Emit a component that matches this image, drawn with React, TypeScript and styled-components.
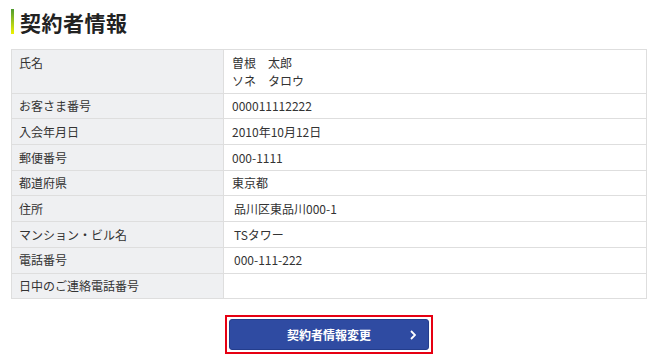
import React from "react";
import styled, { createGlobalStyle } from "styled-components";

const GlobalStyle = createGlobalStyle`
  html, body {
    margin: 0;
    padding: 0;
    background: #ffffff;
  }
  body {
    font-family: "Noto Sans CJK JP", "Noto Sans", sans-serif;
    color: #333333;
  }
`;

const Page = styled.div`
  width: 660px;
  box-sizing: border-box;
  padding: 9px 13px 0 11px;
`;

const Heading = styled.h2`
  display: flex;
  align-items: center;
  gap: 6px;
  margin: 0;
  height: 25px;
  font-size: 21px;
  font-weight: 700;
  color: #222222;
  letter-spacing: 0.5px;
`;

const HeadingBar = styled.span`
  width: 3px;
  height: 25px;
  flex: none;
  background: linear-gradient(to bottom, #4f9a2f 0%, #a6cc1a 55%, #eef200 100%);
`;

const Table = styled.table`
  width: 636px;
  margin-top: 15px;
  border-collapse: collapse;
  font-size: 12px;
  line-height: 18px;
  border: 1px solid #dedede;
`;

const Row = styled.tr`
  border-bottom: 1px solid #dedede;
`;

const Label = styled.th`
  width: 197px;
  padding: 3.5px 7px 3.2px;
  text-align: left;
  vertical-align: top;
  font-weight: 400;
  background: #eff0f2;
  color: #333333;
  border-right: 1px solid #dedede;
`;

const Value = styled.td<{ $indent?: number }>`
  padding: 3.5px 8px 3.2px ${(p) => 8 + (p.$indent ?? 0)}px;
  vertical-align: top;
  color: #333333;
`;

const Line = styled.div``;

const Actions = styled.div`
  display: flex;
  justify-content: center;
  margin-top: 16px;
`;

const FocusRing = styled.div`
  border: 2px solid #e60012;
  padding: 2px;
`;

const PrimaryButton = styled.button`
  position: relative;
  display: flex;
  align-items: center;
  justify-content: center;
  width: 200px;
  height: 31px;
  margin: 0;
  padding: 0;
  border: 1px solid #243d8c;
  border-radius: 3px;
  background: #2f4ba2;
  color: #ffffff;
  font-family: "Noto Sans CJK JP", "Noto Sans", sans-serif;
  font-size: 12px;
  font-weight: 700;
  cursor: pointer;
`;

const Chevron = styled.svg`
  position: absolute;
  right: 12px;
  top: 50%;
  margin-top: -5px;
`;

type Item = { label: string; lines: string[]; indent?: number };

const items: Item[] = [
  { label: "氏名", lines: ["曽根　太郎", "ソネ　タロウ"] },
  { label: "お客さま番号", lines: ["000011112222"] },
  { label: "入会年月日", lines: ["2010年10月12日"] },
  { label: "郵便番号", lines: ["000-1111"] },
  { label: "都道府県", lines: ["東京都"] },
  { label: "住所", lines: ["品川区東品川000-1"], indent: 2 },
  { label: "マンション・ビル名", lines: ["TSタワー"], indent: 2 },
  { label: "電話番号", lines: ["000-111-222"], indent: 2 },
  { label: "日中のご連絡電話番号", lines: ["\u00a0"] },
];

export default function App() {
  return (
    <>
      <GlobalStyle />
      <Page>
        <Heading>
          <HeadingBar />
          契約者情報
        </Heading>
        <Table>
          <tbody>
            {items.map((item) => (
              <Row key={item.label}>
                <Label>{item.label}</Label>
                <Value $indent={item.indent}>
                  {item.lines.map((l, i) => (
                    <Line key={i}>{l}</Line>
                  ))}
                </Value>
              </Row>
            ))}
          </tbody>
        </Table>
        <Actions>
          <FocusRing>
            <PrimaryButton type="button">
              契約者情報変更
              <Chevron width="6" height="10" viewBox="0 0 6 10" aria-hidden="true">
                <path d="M1 1 L5 5 L1 9" fill="none" stroke="#ffffff" strokeWidth="1.8" />
              </Chevron>
            </PrimaryButton>
          </FocusRing>
        </Actions>
      </Page>
    </>
  );
}
